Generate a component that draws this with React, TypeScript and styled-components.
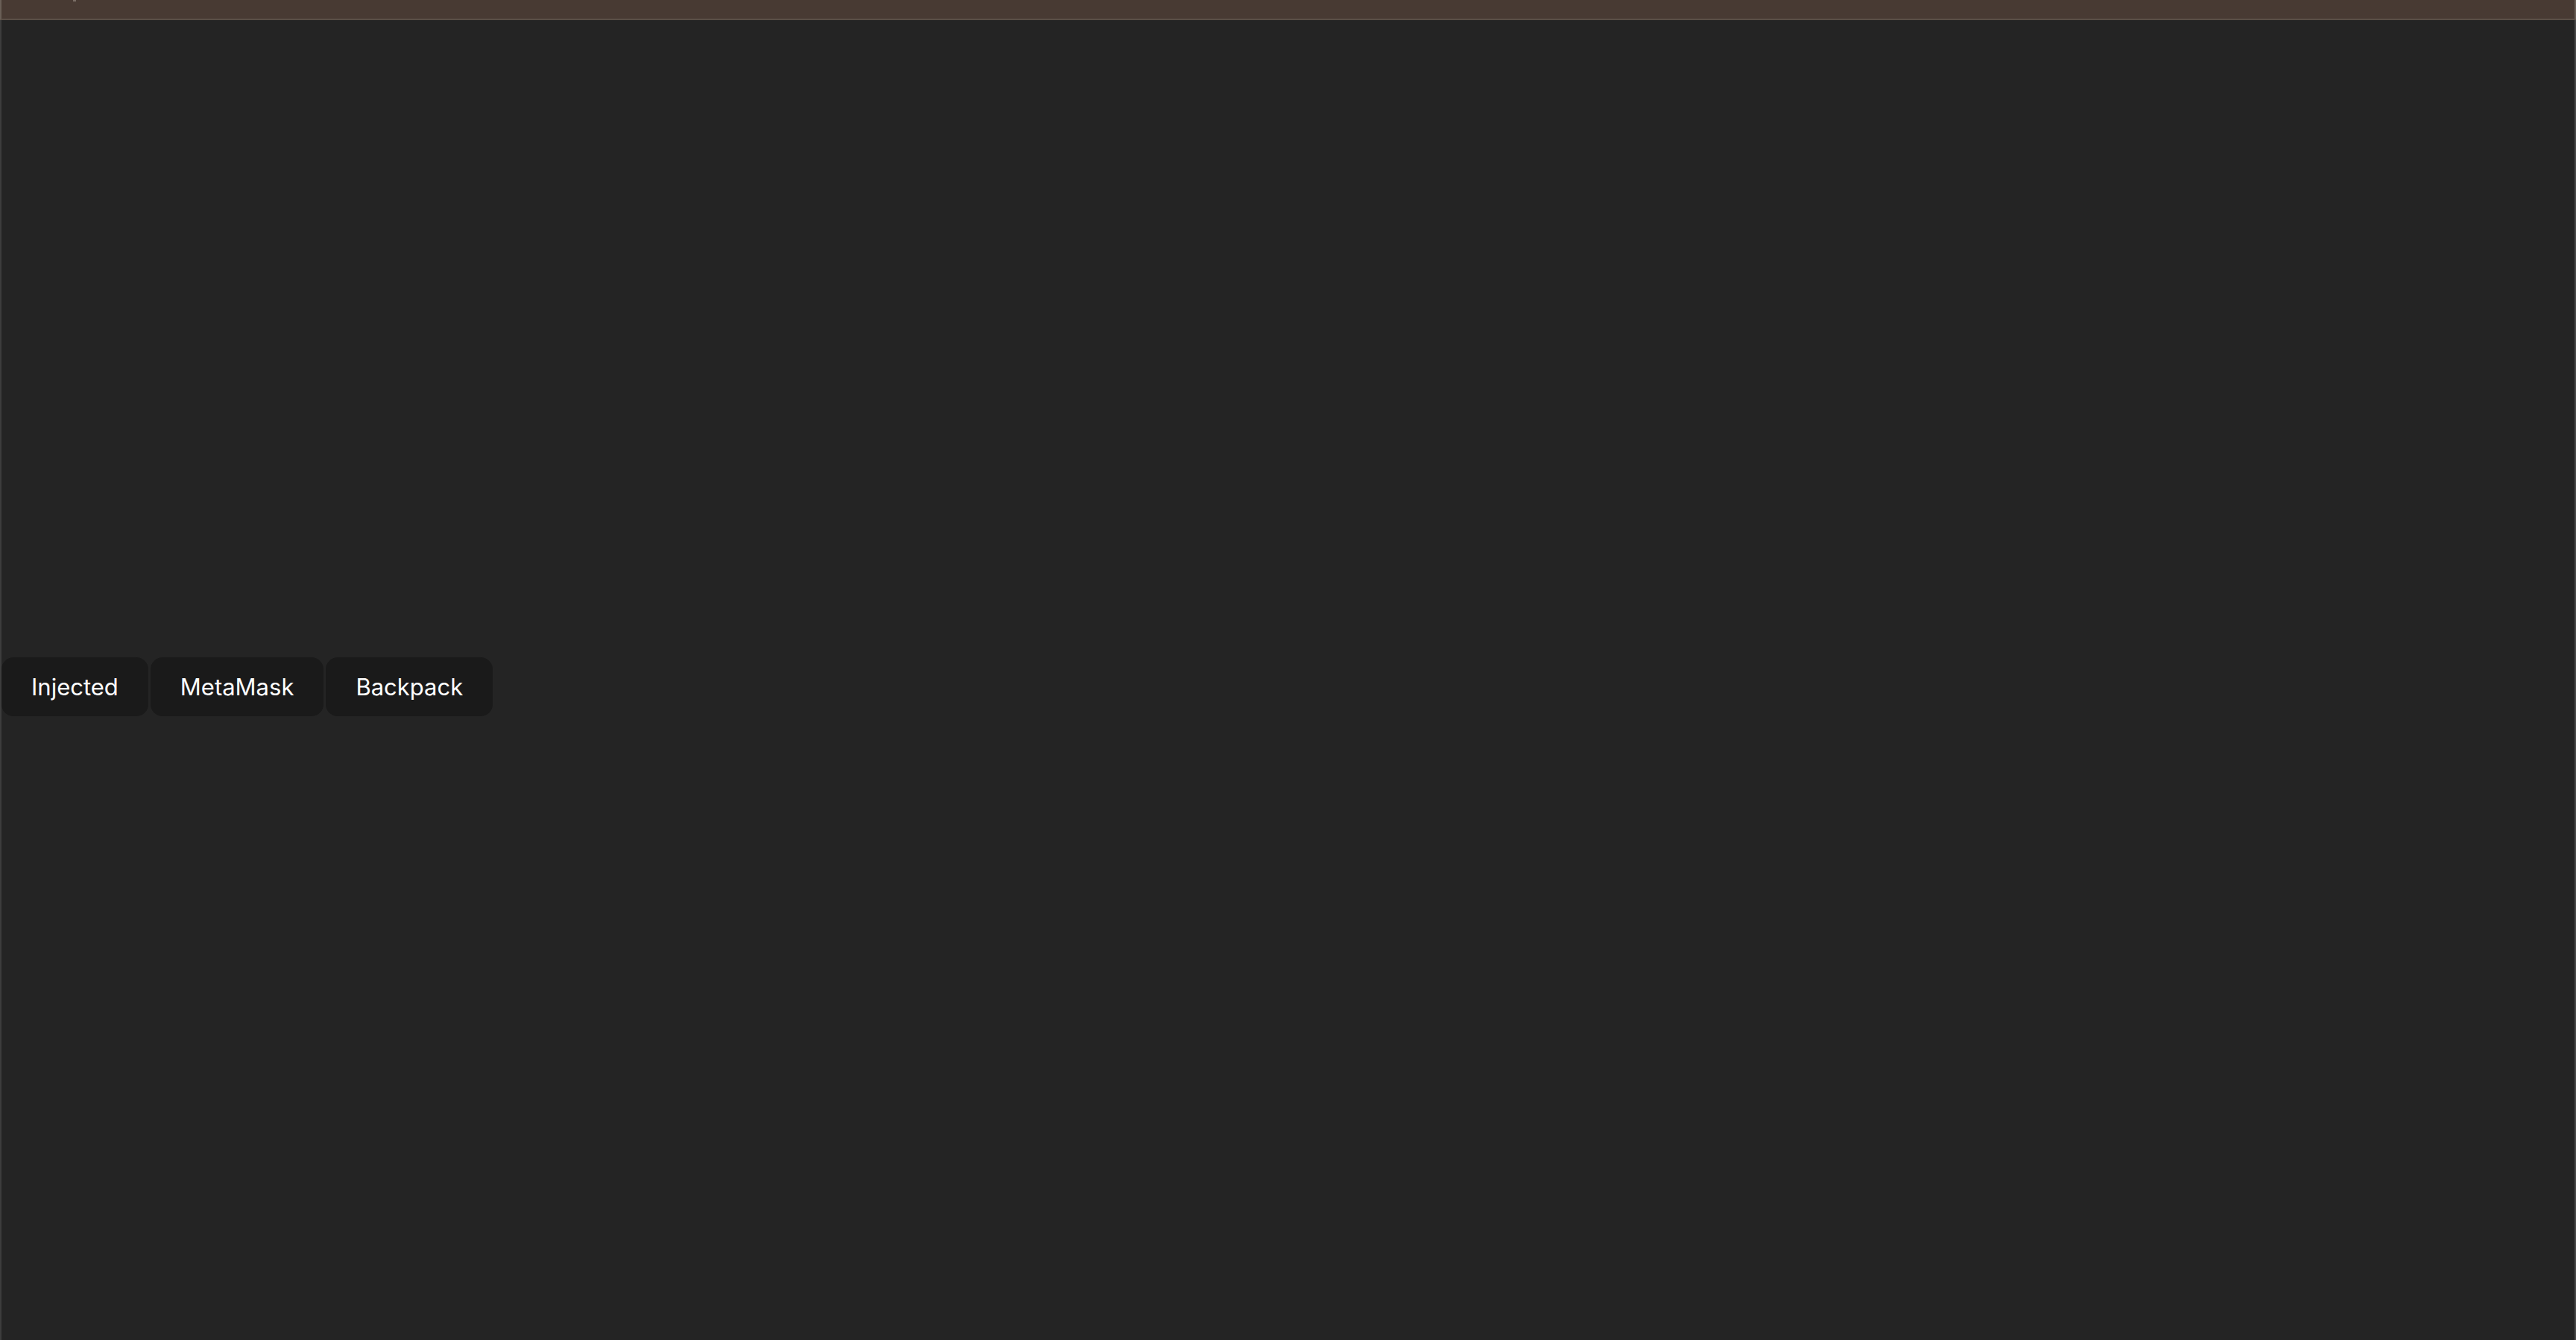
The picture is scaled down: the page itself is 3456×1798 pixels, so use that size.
import React from 'react'

import styled, { createGlobalStyle } from 'styled-components'

const GlobalStyle = createGlobalStyle`
  html, body {
    margin: 0;
    padding: 0;
    height: 100%;
    background: #242424;
  }
  #root {
    height: 100%;
  }
`

// Styled components
const Page = styled.div`
  display: flex;
  flex-direction: column;
  height: 100vh;
  background: #242424;
  font-family: Inter, 'Liberation Sans', sans-serif;
`

const TopBar = styled.div`
  position: relative;
  flex: 0 0 25px;
  background: #483a33;
  border-bottom: 2px solid #5a4f47;
  border-left: 2px solid #6a5f57;
  border-right: 2px solid #6a5f57;
`

const TabMark = styled.span`
  position: absolute;
  left: 96px;
  top: 0;
  width: 4px;
  height: 2px;
  background: #7a6e66;
`

const Main = styled.main`
  flex: 1;
  display: flex;
  align-items: center;
  border-left: 2px solid #3d3d3d;
  border-right: 2px solid #4a4a4a;
  padding-top: 17px;
`

const ConnectorRow = styled.div`
  display: flex;
  gap: 3px;
`

const ConnectorButton = styled.button`
  height: 79px;
  padding: 0 40px;
  border: none;
  border-radius: 16px;
  background: #1a1a1a;
  color: #ffffff;
  font-family: Inter, 'Liberation Sans', sans-serif;
  font-size: 31px;
  font-weight: 400;
  cursor: pointer;
  &:hover {
    border-color: #646cff;
  }
`

const connectors = ['Injected', 'MetaMask', 'Backpack']

const App: React.FC = () => {
  return (
    <>
      <GlobalStyle />
      <Page>
        <TopBar>
          <TabMark />
        </TopBar>
        <Main>
          <ConnectorRow>
            {connectors.map((name) => (
              <ConnectorButton key={name} type="button">
                {name}
              </ConnectorButton>
            ))}
          </ConnectorRow>
        </Main>
      </Page>
    </>
  )
}

export default App
